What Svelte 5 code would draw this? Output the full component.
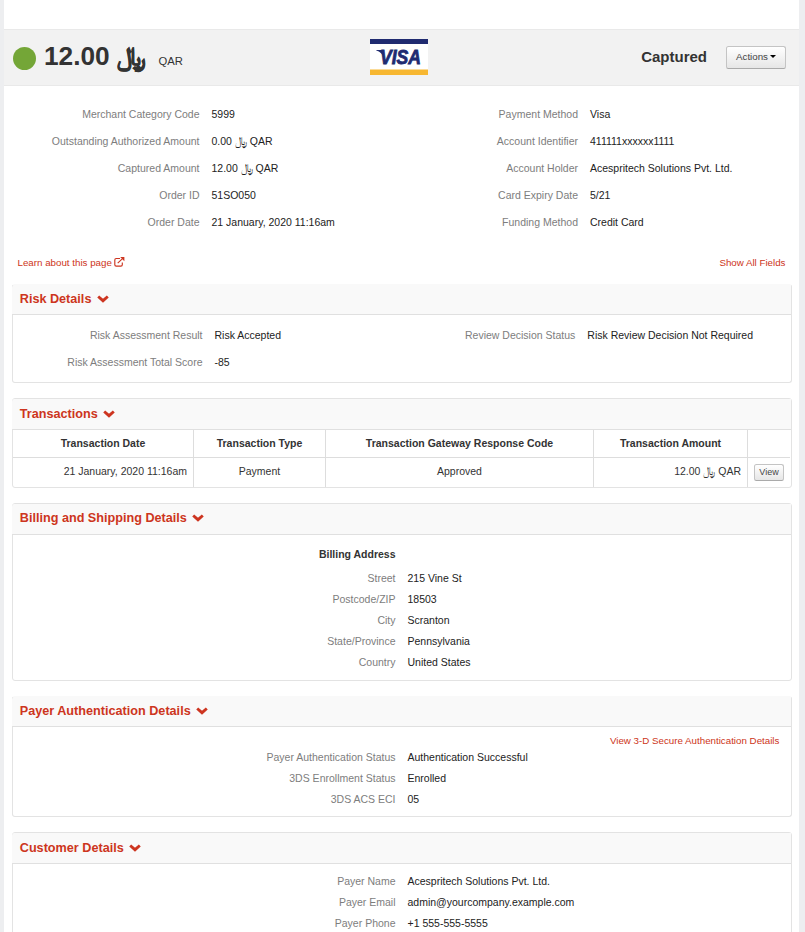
<script>
  const summaryLeft = [
    ['Merchant Category Code', '5999'],
    ['Outstanding Authorized Amount', '0.00 ﷼ QAR'],
    ['Captured Amount', '12.00 ﷼ QAR'],
    ['Order ID', '51SO050'],
    ['Order Date', '21 January, 2020 11:16am']
  ];
  const summaryRight = [
    ['Payment Method', 'Visa'],
    ['Account Identifier', '411111xxxxxx1111'],
    ['Account Holder', 'Acespritech Solutions Pvt. Ltd.'],
    ['Card Expiry Date', '5/21'],
    ['Funding Method', 'Credit Card']
  ];
  const riskLeft = [
    ['Risk Assessment Result', 'Risk Accepted'],
    ['Risk Assessment Total Score', '-85']
  ];
  const riskRight = [['Review Decision Status', 'Risk Review Decision Not Required']];
  const billing = [
    ['Street', '215 Vine St'],
    ['Postcode/ZIP', '18503'],
    ['City', 'Scranton'],
    ['State/Province', 'Pennsylvania'],
    ['Country', 'United States']
  ];
  const payer = [
    ['Payer Authentication Status', 'Authentication Successful'],
    ['3DS Enrollment Status', 'Enrolled'],
    ['3DS ACS ECI', '05']
  ];
  const customer = [
    ['Payer Name', 'Acespritech Solutions Pvt. Ltd.'],
    ['Payer Email', 'admin@yourcompany.example.com'],
    ['Payer Phone', '+1 555-555-5555']
  ];
</script>

{#snippet fields(rows, kind)}
  <dl class={kind}>
    {#each rows as [label, value]}
      <div class="row"><dt>{label}</dt><dd>{value}</dd></div>
    {/each}
  </dl>
{/snippet}

{#snippet heading(title)}
  <h2>{title}<svg class="chevron" width="12" height="8" viewBox="0 0 12 8"><path d="M1.2 1.5 6 5.7l4.8-4.2" fill="none" stroke="#cd3520" stroke-width="2.9" /></svg></h2>
{/snippet}

<main>
  <header>
    <span class="dot"></span>
    <span class="amount">12.00 <span class="rial">﷼</span></span>
    <span class="currency">QAR</span>
    <svg class="visa" width="58" height="36" viewBox="0 0 58 36">
      <rect width="58" height="36" fill="#fff" />
      <rect width="58" height="5" fill="#202b70" />
      <rect y="30.5" width="58" height="5.5" fill="#f7b731" />
      <path d="M6.3 11h6.2l1.8 8q-2.4-6-8-7.5z" fill="#202b70" />
      <text x="10" y="25" textLength="41" lengthAdjust="spacingAndGlyphs">VISA</text>
    </svg>
    <strong class="status">Captured</strong>
    <button class="actions">Actions<i class="caret"></i></button>
  </header>

  <section class="summary">
    {@render fields(summaryLeft, 'wide first')}
    {@render fields(summaryRight, 'wide second')}
  </section>

  <nav>
    <a href="#learn">Learn about this page<svg width="11" height="10" viewBox="0 0 11 10"><path d="M6 1.5H2.2Q.8 1.5.8 2.9v4.8q0 1.4 1.4 1.4h4.7q1.4 0 1.4-1.4V5.5M3.7 6.1 8.8 1.4" fill="none" stroke="#cd3520" stroke-width="1.15" /><path d="M6.2 0h4.2v4.2z" fill="#cd3520" /></svg></a>
    <a href="#fields">Show All Fields</a>
  </nav>

  <section class="panel flat risk">
    {@render heading('Risk Details')}
    <div class="body">
      {@render fields(riskLeft, 'wide first')}
      {@render fields(riskRight, 'wide second')}
    </div>
  </section>

  <section class="panel transactions">
    {@render heading('Transactions')}
    <table>
      <colgroup><col class="c1" /><col class="c2" /><col class="c3" /><col class="c4" /><col /></colgroup>
      <thead>
        <tr><th>Transaction Date</th><th>Transaction Type</th><th>Transaction Gateway Response Code</th><th>Transaction Amount</th><th></th></tr>
      </thead>
      <tbody>
        <tr><td class="right">21 January, 2020 11:16am</td><td>Payment</td><td>Approved</td><td class="right">12.00 ﷼ QAR</td><td class="cell"><button class="view">View</button></td></tr>
      </tbody>
    </table>
  </section>

  <section class="panel billing">
    {@render heading('Billing and Shipping Details')}
    <div class="body">
      <h3>Billing Address</h3>
      {@render fields(billing, 'narrow')}
    </div>
  </section>

  <section class="panel flat payer">
    {@render heading('Payer Authentication Details')}
    <div class="body">
      <a href="#secure">View 3-D Secure Authentication Details</a>
      {@render fields(payer, 'narrow')}
    </div>
  </section>

  <section class="panel customer">
    {@render heading('Customer Details')}
    <div class="body">
      {@render fields(customer, 'narrow')}
    </div>
  </section>
</main>

<style>
  :global(body) { background: #edeef0; overflow: hidden; }
  main {
    box-sizing: border-box;
    width: 795px;
    height: 932px;
    margin-left: 4px;
    padding-top: 29px;
    overflow: hidden;
    background: #fff;
    color: #333;
    font: 10.5px/21px "Liberation Sans", Arial, sans-serif;
  }
  header {
    box-sizing: border-box;
    display: flex;
    align-items: center;
    height: 57px;
    padding: 0 13px 2px 9px;
    border: solid #e9e9e9;
    border-width: 1px 0;
    background: #f2f2f2;
    white-space: pre;
  }
  .dot { width: 23px; height: 23px; margin-top: 3px; border-radius: 50%; background: #74a637; }
  .amount { width: 106px; margin: -2px 0 0 8px; font-size: 26.25px; font-weight: bold; line-height: 40px; }
  .rial { -webkit-text-stroke: .6px #333; }
  .currency { margin: 10px 0 0 8.5px; width: 60px; font-size: 11.25px; }
  .visa { margin: 1px 0 0 151.5px; }
  .visa text { font: italic bold 19.5px "Liberation Sans", Arial, sans-serif; fill: #202b70; stroke: #202b70; stroke-width: .8px; }
  .status { margin-left: auto; font-size: 15px; }
  button {
    box-sizing: border-box;
    padding: 0;
    border: 1px solid #c4c4c4;
    border-bottom-color: #aaa;
    border-radius: 2.5px;
    background: linear-gradient(#fff, #e6e6e6);
    color: #444;
    font: 9.75px/12px "Liberation Sans", Arial, sans-serif;
  }
  .actions { display: flex; align-items: center; justify-content: center; width: 60px; height: 23px; margin: 1px 0 0 19px; }
  .caret { margin: -1px 0 0 2px; border: 3.3px solid transparent; border-top: 3.3px solid #000; border-bottom: 0; }
  .summary { display: flex; height: 135px; padding-top: 15px; }
  dl, dd { margin: 0; }
  .row { display: flex; gap: 12px; }
  .wide .row { height: 27px; line-height: 27px; }
  .narrow .row { height: 21px; }
  dt { text-align: right; color: #7d7d7d; white-space: nowrap; }
  dd { color: #222; white-space: nowrap; }
  .summary .first { width: 378.5px; }
  .summary .first dt { width: 195.5px; }
  .summary .second dt { width: 195.5px; }
  nav { display: flex; justify-content: space-between; height: 21px; margin: 16px 13.5px 11px; }
  a { color: #cd3520; font-size: 9.75px; text-decoration: none; }
  nav svg { margin-left: 2px; vertical-align: -1px; }
  .panel {
    box-sizing: border-box;
    width: 780px;
    margin: 0 0 15px 8px;
    border: 1px solid #e3e3e3;
    border-radius: 3px;
  }
  .flat { border-top-color: #f9f9f9; }
  h2 {
    box-sizing: border-box;
    height: 31px;
    margin: 0 0 0 -1px;
    padding: 0 7.75px;
    border-bottom: 1px solid #e0e0e0;
    border-radius: 3px 0 0 0;
    background: #f9f9f9;
    color: #cd3520;
    font-size: 12.65px;
    line-height: 30px;
  }
  .flat h2 { height: 30px; line-height: 28px; }
  .billing h2 { line-height: 28px; }
  .chevron { margin-left: 5.3px; }
  .risk { height: 99px; }
  .risk .body { display: flex; padding-top: 7px; }
  .risk .first { width: 372.3px; }
  .risk .first dt { width: 189.5px; }
  .risk .second dt { width: 190px; }
  .transactions { height: 90px; }
  table { width: 777px; border-collapse: separate; border-spacing: 0; table-layout: fixed; }
  .c1 { width: 181px; }
  .c2 { width: 132px; }
  .c3 { width: 268px; }
  .c4 { width: 154px; }
  th, td { box-sizing: border-box; height: 28px; padding: 0 6px; border-right: 1px solid #ddd; text-align: center; }
  th { border-bottom: 1px solid #ddd; line-height: 27px; }
  td { height: 29px; padding-bottom: 2px; line-height: 25px; }
  th:last-child, td:last-child { border-right: 0; }
  .right { text-align: right; }
  td.cell { padding: 0 0 0 6px; text-align: left; line-height: 0; }
  .view { width: 30px; height: 17px; padding-bottom: 1px; font-size: 9px; }
  .billing { height: 178px; }
  h3 { width: 382.5px; height: 24px; margin: 0; padding-top: 9px; text-align: right; font-size: 10.5px; line-height: 21px; }
  .narrow dt { width: 382.5px; }
  .payer { height: 121px; }
  .payer a { display: block; height: 20px; padding: 3px 11.6px 0 0; text-align: right; line-height: 21px; box-sizing: border-box; }
  .customer { height: 130px; }
  .customer .body { padding-top: 7px; }
</style>
